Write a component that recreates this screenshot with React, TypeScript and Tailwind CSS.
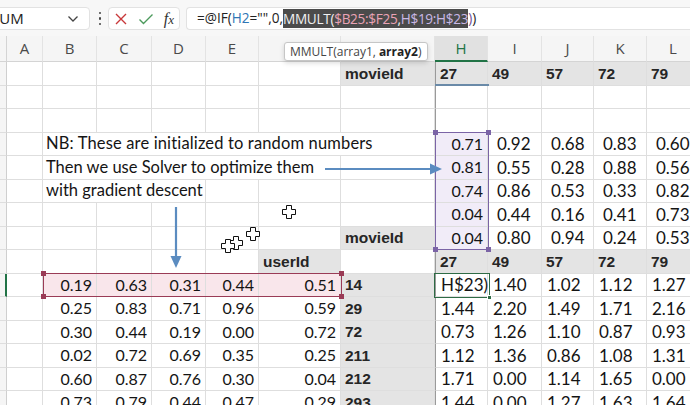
import React from "react"

const NUM = "font-['Lato','Carlito','Noto_Sans',sans-serif] text-[16px] text-[#141414]"
const BIG = "font-['Lato','Carlito','Noto_Sans',sans-serif] text-[17px] text-[#141414]"
const TXT = "font-['Lato','Carlito','Noto_Sans',sans-serif] text-[16.5px] text-[#141414]"
const BOLD = "font-['Liberation_Sans',Arial,sans-serif] font-bold text-[15.5px] text-[#262626]"

type CellProps = { children?: React.ReactNode; className?: string }

function Cell({ children, className = "" }: CellProps) {
  return (
    <div className={"flex items-center whitespace-nowrap border-r border-b border-[#dedede] px-[4px] " + className}>
      {children}
    </div>
  )
}

const topLeft = [
  ["0.19", "0.63", "0.31", "0.44", "0.51"],
  ["0.25", "0.83", "0.71", "0.96", "0.59"],
  ["0.30", "0.44", "0.19", "0.00", "0.72"],
  ["0.02", "0.72", "0.69", "0.35", "0.25"],
  ["0.60", "0.87", "0.76", "0.30", "0.04"],
  ["0.73", "0.79", "0.44", "0.47", "0.29"],
]
const userIds = ["14", "29", "72", "211", "212", "293"]
const preds = [
  ["H$23)", "1.40", "1.02", "1.12", "1.27"],
  ["1.44", "2.20", "1.49", "1.71", "2.16"],
  ["0.73", "1.26", "1.10", "0.87", "0.93"],
  ["1.12", "1.36", "0.86", "1.08", "1.31"],
  ["1.71", "0.00", "1.14", "1.65", "0.00"],
  ["1.44", "0.00", "1.27", "1.63", "1.64"],
]
const movieFactors = [
  ["0.71", "0.92", "0.68", "0.83", "0.60"],
  ["0.81", "0.55", "0.28", "0.88", "0.56"],
  ["0.74", "0.86", "0.53", "0.33", "0.82"],
  ["0.04", "0.44", "0.16", "0.41", "0.73"],
  ["0.04", "0.80", "0.94", "0.24", "0.53"],
]
const movieIds = ["27", "49", "57", "72", "79"]

function RowHead({ active = false }: { active?: boolean }) {
  return (
    <div
      className={
        "border-b border-[#dedede] bg-[#f5f5f5] " +
        (active ? "border-r-2 border-r-[#217346]" : "border-r border-r-[#cfcfcf]")
      }
    />
  )
}

function Cross({ x, y }: { x: number; y: number }) {
  return (
    <svg width="14" height="14" viewBox="0 0 14 14" className="absolute" style={{ left: x - 7, top: y - 7 }}>
      <path d="M4.5 0.5h5v4h4v5h-4v4h-5v-4h-4v-5h4z" fill="#fff" stroke="#111" strokeWidth="1" />
    </svg>
  )
}

function Handle({ x, y, color }: { x: number; y: number; color: string }) {
  return <div className={"absolute h-[5px] w-[5px] " + color} style={{ left: x - 2.5, top: y - 2.5 }} />
}

export default function App() {
  const cols = ["A", "B", "C", "D", "E", "F", "G", "H", "I", "J", "K", "L"]
  const colCenter = "flex items-center justify-center border-r border-[#e3e3e3]"

  return (
    <div className="relative h-[405px] w-[690px] overflow-hidden bg-white">
      {/* formula bar */}
      <div className="flex h-[36px] items-center bg-[#f7f7f7] pt-[1px]">
        <div className="ml-[-16px] flex h-[23px] w-[106px] items-center justify-between rounded-[4px] border border-[#e2e2e2] bg-white pl-[6px] pr-[10px] font-['Open_Sans',sans-serif] text-[15px] text-[#222]">
          <span>SUM</span>
          <svg width="12" height="8" viewBox="0 0 12 8">
            <path d="M1.5 1.5 6 6l4.5-4.5" fill="none" stroke="#444" strokeWidth="1.3" />
          </svg>
        </div>
        <div className="ml-[5px] flex w-[10px] flex-col items-center gap-[3px]">
          <div className="h-[2.5px] w-[2.5px] rounded-full bg-[#444]" />
          <div className="h-[2.5px] w-[2.5px] rounded-full bg-[#444]" />
          <div className="h-[2.5px] w-[2.5px] rounded-full bg-[#444]" />
        </div>
        <div className="ml-[3px] flex h-[23px] w-[72px] items-center justify-between rounded-[4px] border border-[#e2e2e2] bg-white px-[5px]">
          <svg width="14" height="14" viewBox="0 0 14 14">
            <path d="M2 2l10 10M12 2 2 12" stroke="#c8383a" strokeWidth="1.4" fill="none" />
          </svg>
          <svg width="16" height="14" viewBox="0 0 16 14">
            <path d="M1.5 7.5 5.5 11.5 14.5 2.5" stroke="#4c9a5c" strokeWidth="1.4" fill="none" />
          </svg>
          <span className="font-['Liberation_Serif',serif] text-[16px] italic leading-none text-[#333]">
            f<span className="text-[13px]">x</span>
          </span>
        </div>
        <div className="ml-[6px] flex h-[23px] flex-1 items-center rounded-l-[4px] border border-r-0 border-[#e2e2e2] bg-white pl-[10px] font-['Open_Sans',sans-serif] text-[13.6px] text-[#222]">
          <span>=@IF(</span>
          <span className="text-[#2f75b5]">H2</span>
          <span>="",0,</span>
          <span className="bg-[#4b4b4b] leading-[19px] tracking-[-0.3px]">
            <span className="text-[#f0f0f0]">MMULT(</span>
            <span className="text-[#eaa3b6]">$B25:$F25</span>
            <span className="text-[#f0f0f0]">,</span>
            <span className="text-[#c9b8e6]">H$19:H$23</span>
          </span>
          <span className="text-[#6b4f9a]">)</span>
          <span>)</span>
        </div>
      </div>

      {/* sheet */}
      <div className="grid w-[700px] grid-cols-[7px_36px_54px_55px_54px_53px_82px_94px_53px_54px_52px_53px_53px] grid-rows-[26px] auto-rows-[23.5px]">
        {/* column headers */}
        <div className="border-b border-r border-[#d4d4d4] bg-[#f5f5f5]" />
        {cols.map((c) => (
          <div
            key={c}
            className={
              colCenter +
              " font-['Open_Sans',sans-serif] text-[15px] " +
              (c === "H"
                ? "border-b-2 border-b-[#217346] bg-[#e1e1e1] text-[#217346]"
                : "border-b border-b-[#d4d4d4] bg-[#f5f5f5] text-[#4a4a4a]")
            }
          >
            {c}
          </div>
        ))}

        {/* row 1 */}
        <RowHead />
        <Cell />
        <Cell />
        <Cell />
        <Cell />
        <Cell />
        <Cell />
        <Cell className={"bg-[#e4e4e4] " + BOLD}>movieId</Cell>
        {movieIds.map((m, i) => (
          <Cell key={m} className={"bg-[#e4e4e4] " + BOLD + (i === 0 ? " border-l border-l-[#9a9a9a]" : "")}>
            {m}
          </Cell>
        ))}

        {/* rows 2-3 */}
        {[0, 1].map((r) => (
          <React.Fragment key={r}>
            <RowHead />
            {Array.from({ length: 12 }).map((_, i) => (
              <Cell key={i} className={i === 7 ? "border-l border-l-[#9a9a9a]" : ""} />
            ))}
          </React.Fragment>
        ))}

        {/* rows 4-8 */}
        {movieFactors.map((vals, r) => (
          <React.Fragment key={"m" + r}>
            <RowHead />
            <Cell />
            {r === 0 && (
              <Cell className={"col-span-6 overflow-visible pl-[3px] tracking-[0.15px] " + TXT}>
                NB: These are initialized to random numbers
              </Cell>
            )}
            {r === 1 && (
              <>
                <Cell className={"col-span-5 overflow-visible pl-[3px] " + TXT}>
                  Then we use Solver to optimize them
                </Cell>
                <Cell />
              </>
            )}
            {r === 2 && (
              <>
                <Cell className={"col-span-3 overflow-visible pl-[3px] " + TXT}>with gradient descent</Cell>
                <Cell />
                <Cell />
                <Cell />
              </>
            )}
            {r === 3 && (
              <>
                <Cell />
                <Cell />
                <Cell />
                <Cell />
                <Cell />
                <Cell />
              </>
            )}
            {r === 4 && (
              <>
                <Cell />
                <Cell />
                <Cell />
                <Cell />
                <Cell />
                <Cell className={"bg-[#e4e4e4] " + BOLD}>movieId</Cell>
              </>
            )}
            {vals.map((v, i) =>
              i === 0 ? (
                <Cell key={i} className={"justify-end bg-[#f1ecf8] border-l border-l-[#9a9a9a] " + NUM}>
                  {v}
                </Cell>
              ) : (
                <Cell key={i} className={"pl-[9px] " + BIG}>
                  {v}
                </Cell>
              )
            )}
          </React.Fragment>
        ))}

        {/* row 9 */}
        <RowHead />
        <Cell />
        <Cell />
        <Cell />
        <Cell />
        <Cell />
        <Cell className={"bg-[#e4e4e4] " + BOLD}>userId</Cell>
        <Cell />
        {movieIds.map((m, i) => (
          <Cell key={m} className={"bg-[#e4e4e4] " + BOLD + (i === 0 ? " border-l border-l-[#9a9a9a]" : "")}>
            {m}
          </Cell>
        ))}

        {/* rows 10-15 */}
        {topLeft.map((vals, r) => (
          <React.Fragment key={"u" + r}>
            <RowHead active={r === 0} />
            <Cell />
            {vals.map((v, i) => (
              <Cell key={i} className={"justify-end " + NUM + (r === 0 ? " bg-[#f9e6eb]" : "")}>
                {v}
              </Cell>
            ))}
            <Cell className={"bg-[#e4e4e4] " + BOLD}>{userIds[r]}</Cell>
            {preds[r].map((v, i) => (
              <Cell key={i} className={"pl-[5px] " + BIG + (i === 0 ? " border-l border-l-[#9a9a9a]" : "")}>
                {v}
              </Cell>
            ))}
          </React.Fragment>
        ))}
      </div>

      {/* movie-factor selection (H19:H23) */}
      <div className="absolute left-[435px] top-[132px] h-[118px] w-[54px] border-[1.5px] border-[#7b64a6]" />
      <Handle x={435.5} y={132.5} color="bg-[#7b64a6]" />
      <Handle x={488.5} y={132.5} color="bg-[#7b64a6]" />
      <Handle x={435.5} y={249.5} color="bg-[#7b64a6]" />
      <Handle x={488.5} y={249.5} color="bg-[#7b64a6]" />

      {/* user-factor selection ($B25:$F25) */}
      <div className="absolute left-[43px] top-[273px] h-[24px] w-[299px] border-[1.5px] border-[#9a3b56]" />
      <Handle x={43.5} y={273.5} color="bg-[#9a3b56]" />
      <Handle x={341.5} y={273.5} color="bg-[#9a3b56]" />
      <Handle x={43.5} y={296.5} color="bg-[#9a3b56]" />
      <Handle x={341.5} y={296.5} color="bg-[#9a3b56]" />

      {/* active cell */}
      <div className="absolute left-[434px] top-[273px] h-[25px] w-[56px] border-[1.5px] border-[#2e6b45]" />
      <div className="absolute left-[487px] top-[295px] h-[5px] w-[5px] border border-white bg-[#2e6b45]" />

      {/* "27" header underline */}
      <div className="absolute left-[435px] top-[84px] h-[2px] w-[54px] bg-[#6a8aa8]" />

      {/* arrows */}
      <svg className="absolute left-0 top-0" width="690" height="405">
        <line x1="325" y1="169" x2="432" y2="169" stroke="#5b8cc0" strokeWidth="2.2" />
        <path d="M442 169 430 163.5v11z" fill="#5b8cc0" />
        <line x1="176" y1="207" x2="176" y2="258" stroke="#5b8cc0" strokeWidth="2.2" />
        <path d="M176 268 170.5 256h11z" fill="#5b8cc0" />
      </svg>

      {/* cursors */}
      <Cross x={289} y={212} />
      <Cross x={253} y={234} />
      <Cross x={236} y={243} />
      <Cross x={228} y={246} />

      {/* tooltip */}
      <div className="absolute left-[284px] top-[42px] flex h-[19px] items-center rounded-[3px] border border-[#c6c6c6] bg-white px-[5px] font-['Open_Sans',sans-serif] text-[12px] text-[#444] shadow-[0_2px_5px_rgba(0,0,0,0.15)]">
        MMULT(array1, <b className="ml-[3px] text-[#222]">array2</b>)
      </div>
    </div>
  )
}
